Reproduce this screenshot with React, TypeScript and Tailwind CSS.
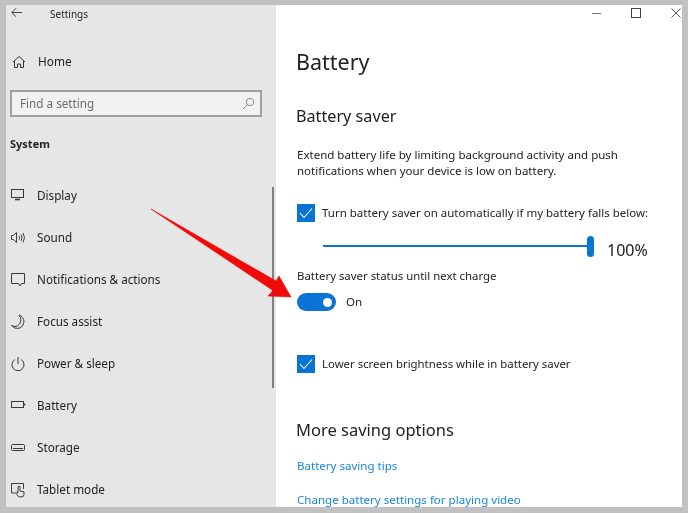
import React from "react";

const stroke = { fill: "none", stroke: "#3a3a3a", strokeWidth: 1 };

const icons: Record<string, React.ReactNode> = {
  Display: (
    <svg className="mb-[3px]" width="16" height="14" viewBox="0 0 16 14" {...stroke}>
      <rect x="1.500" y="1.500" width="12" height="8" />
      <path d="M5 11.500h5" strokeWidth="1.600" />
    </svg>
  ),
  Sound: (
    <svg className="mb-[1px]" width="16" height="14" viewBox="0 0 16 14" {...stroke}>
      <path d="M1.500 4.500h2l3-3v10l-3-3h-2z" />
      <path d="M9 5q1.200 1.800 0 3.600M11 3.500q2 3.200 0 6.400M13 2q3 4.600 0 9.400" />
    </svg>
  ),
  "Notifications & actions": (
    <svg className="mb-[1px]" width="16" height="16" viewBox="0 0 16 16" {...stroke}>
      <path d="M1.500 1.500h13v10h-3l-1.500 2.500-1.500-2.500h-7z" />
    </svg>
  ),
  "Focus assist": (
    <svg width="16" height="16" viewBox="0 0 16 16" {...stroke}>
      <path d="M9 1q3.500 5 .5 9T1.500 11.500q3 3.800 7.500 2.800 4.500-1.200 5-6.300Q14 3 9 1z" />
    </svg>
  ),
  "Power & sleep": (
    <svg className="mb-[1px]" width="16" height="16" viewBox="0 0 16 16" {...stroke}>
      <path d="M5 3.500a6 6 0 1 0 6 0M8 1v7" />
    </svg>
  ),
  Battery: (
    <svg className="mb-[2px]" width="16" height="10" viewBox="0 0 16 10" {...stroke}>
      <rect x="1.500" y="1.500" width="12" height="6" />
      <path d="M14.500 3.500v2" strokeWidth="1.500" />
    </svg>
  ),
  Storage: (
    <svg className="mb-[1px]" width="16" height="10" viewBox="0 0 16 10" {...stroke}>
      <rect x="1.500" y="1.500" width="13" height="6" rx="1" />
      <path d="M3 5.500h10" />
    </svg>
  ),
  "Tablet mode": (
    <svg width="16" height="16" viewBox="0 0 16 16" {...stroke}>
      <path d="M6 11H1.500V1.500h12V7" />
      <path d="M8 4.500v6l-1-.8v3q1 2.300 3 2.300h1q3 0 3-2.500V10l-4-1V4.500z" />
    </svg>
  ),
};

const nav = [
  "Display",
  "Sound",
  "Notifications & actions",
  "Focus assist",
  "Power & sleep",
  "Battery",
  "Storage",
  "Tablet mode",
];

function Check() {
  return (
    <span className="flex h-[18px] w-[18px] shrink-0 items-center justify-center bg-[#0a74d6]">
      <svg width="14" height="12" viewBox="0 0 14 12" fill="none" stroke="#fff" strokeWidth="1.100">
        <path d="M1 6l4 4.500L13 1.500" />
      </svg>
    </span>
  );
}

export default function App() {
  return (
    <div
      className="relative h-[513px] w-[688px] overflow-hidden bg-[#c1c1c1] pb-[6px] pl-[6px] pr-[6px] pt-[5px] text-[#222222]"
      style={{ fontFamily: '"Noto Sans", "Open Sans", sans-serif' }}
    >
      <div className="flex h-[502px] w-[676px] overflow-hidden bg-white blur-[0.3px]">
        {/* Sidebar */}
        <aside className="relative flex h-full w-[270px] shrink-0 flex-col overflow-hidden bg-[#e6e6e6] pl-[4px]">
          <div className="flex h-[19px] shrink-0 items-center pl-[1px]">
            <svg className="mb-[5px]" width="12" height="11" viewBox="0 0 14 12" fill="none" stroke="#333" strokeWidth="1.100">
              <path d="M13 6H1M6 1L1 6l5 5" />
            </svg>
            <span className="ml-[27px] text-[10px]">Settings</span>
          </div>
          <div className="mt-[25px] flex h-[26px] shrink-0 items-center pl-[2px] text-[11.800px]">
            <svg width="14" height="14" viewBox="0 0 14 14" fill="none" stroke="#333" strokeWidth="1">
              <path d="M1 7l6-5.500L13 7M2.500 6v6.500h3V9h3v3.500h3V6" />
            </svg>
            <span className="ml-[12px]">Home</span>
          </div>
          <div className="mt-[15px] flex h-[27px] w-[252px] shrink-0 items-center justify-between border-2 border-[#a0a0a0] bg-[#f2f2f2] pl-[8px] pr-[5px] text-[11.700px] text-[#6b6b6b]">
            <span>Find a setting</span>
            <svg width="13" height="13" viewBox="0 0 13 13" fill="none" stroke="#8a8a8a" strokeWidth="1">
              <circle cx="8" cy="5" r="3.700" />
              <path d="M5.200 7.800L1 12" />
            </svg>
          </div>
          <div className="mt-[18px] text-[11px] font-bold leading-[17px]">System</div>
          <div className="mt-[23px] flex flex-col">
            {nav.map((n) => (
              <div key={n} className="flex h-[42px] shrink-0 items-center text-[11.700px]">
                <span className="flex w-[27px] shrink-0 items-center">{icons[n]}</span>
                <span>{n}</span>
              </div>
            ))}
          </div>
          <div className="absolute right-[2px] top-[182px] h-[201px] w-[2px] bg-[#808080]" />
        </aside>

        {/* Content */}
        <main className="relative min-w-0 flex-1 pl-[20px]">
          <div className="absolute right-[1px] top-[3px] flex items-center gap-[30px]">
            <div className="h-[1px] w-[9px] bg-[#777777]" />
            <div className="h-[10px] w-[10px] border border-[#444444]" />
            <svg width="10" height="10" viewBox="0 0 10 10" fill="none" stroke="#555" strokeWidth="1">
              <path d="M.5.5l9 9M9.500.5l-9 9" />
            </svg>
          </div>
          <h1 className="mt-[40px] text-[21.500px] font-normal leading-[34px]">Battery</h1>
          <h2 className="mt-[25px] text-[16.200px] font-normal leading-[24px]">Battery saver</h2>
          <p className="mt-[19px] w-[360px] pl-[1px] text-[11.530px] leading-[16px]">
            Extend battery life by limiting background activity and push notifications when your device is low on battery.
          </p>
          <div className="mt-[25px] flex items-center gap-[7px] pl-[1px] text-[11.500px] leading-[18px]">
            <Check />
            <span className="whitespace-nowrap">Turn battery saver on automatically if my battery falls below:</span>
          </div>
          <div className="mt-[9px] flex items-center pl-[27px]">
            <div className="h-[2px] w-[264px] bg-[#0a74d6]" />
            <div className="h-[21px] w-[7px] rounded-full bg-[#0a74d6]" />
            <span className="ml-[13px] mt-[8px] text-[16px] leading-[22px]">100%</span>
          </div>
          <div className="mt-[6px] pl-[1px] text-[11.400px] leading-[18px]">Battery saver status until next charge</div>
          <div className="mt-[8px] flex items-center pl-[1px] text-[11.600px]">
            <div className="flex h-[18px] w-[39px] items-center justify-end rounded-full bg-[#0a74d6] pr-[4px]">
              <div className="h-[9px] w-[9px] rounded-full bg-white" />
            </div>
            <span className="ml-[10px]">On</span>
          </div>
          <div className="mt-[44px] flex items-center gap-[7px] pl-[1px] text-[11.400px] leading-[18px]">
            <Check />
            <span>Lower screen brightness while in battery saver</span>
          </div>
          <h2 className="mt-[45px] text-[16.500px] font-normal leading-[24px]">More saving options</h2>
          <div className="mt-[15px] pl-[1px] text-[11.550px] leading-[18px] text-[#1a86dc]">Battery saving tips</div>
          <div className="mt-[16px] pl-[1px] text-[11.550px] leading-[18px] text-[#1a86dc]">
            Change battery settings for playing video
          </div>
        </main>
      </div>

      {/* Annotation arrow */}
      <svg className="absolute left-0 top-0" width="688" height="513" viewBox="0 0 688 513">
        <path
          d="M151 209L276 281L279 276L291 297L268 296L273 290.500z"
          fill="#f00a0a"
          stroke="#f00a0a"
          strokeWidth="0.600"
          strokeLinejoin="round"
        />
      </svg>
    </div>
  );
}
